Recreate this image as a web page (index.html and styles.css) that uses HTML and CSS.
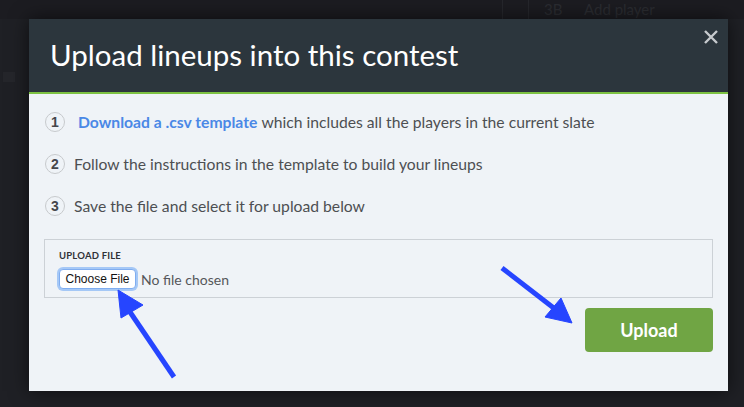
FILE: index.html
```html
<!doctype html>
<html lang="en">
  <head>
    <meta charset="UTF-8" />
    <meta name="viewport" content="width=device-width, initial-scale=1.0" />
    <title>Upload lineups</title>
    <link rel="stylesheet" href="styles.css">
  </head>
  <body>
    <div class="backdrop">
      <span class="col-line"></span>
      <span class="col-line"></span>
      <span class="pos">3B</span>
      <span class="add">Add player</span>
    </div>
    <div class="side-mark"></div>

    <div class="modal">
      <div class="modal-header">
        <h1>Upload lineups into this contest</h1>
        <button class="close" aria-label="Close">
          <svg width="16" height="16" viewBox="0 0 16 16">
            <path d="M2 2 L14 14 M14 2 L2 14" stroke="#c6cacd" stroke-width="2.4" fill="none" />
          </svg>
        </button>
      </div>
      <div class="modal-body">
        <ol class="steps">
          <li><span class="num">1</span> <a href="#" class="link">Download a .csv template</a> which includes all the players in the current slate</li>
          <li><span class="num">2</span>Follow the instructions in the template to build your lineups</li>
          <li><span class="num">3</span>Save the file and select it for upload below</li>
        </ol>
        <div class="upload-box">
          <div class="upload-label">UPLOAD FILE</div>
          <div class="file-row">
            <button class="choose">Choose File</button>
            <span class="no-file">No file chosen</span>
          </div>
        </div>
        <div class="actions">
          <button class="upload">Upload</button>
        </div>
      </div>
    </div>

    <svg class="arrows" width="744" height="407" viewBox="0 0 744 407">
      <g fill="#2645ff" stroke="#2645ff">
        <line x1="174" y1="377" x2="130" y2="312" stroke-width="5" />
        <polygon points="118,290 121,318 143,305" stroke-width="1" />
        <line x1="502" y1="268" x2="555" y2="309" stroke-width="5" />
        <polygon points="572,323 545,317 561,298" stroke-width="1" />
      </g>
    </svg>
  </body>
</html>
```

FILE: styles.css
```css
body {
  margin: 0;
  height: 407px;
  overflow: hidden;
  background-color: #1f2025;
  font-family: Lato, "Liberation Sans", sans-serif;
  position: relative;
}
.backdrop {
  height: 19px;
  display: flex;
  align-items: flex-end;
  padding-left: 502px;
  color: #2b2c31;
  font-size: 15px;
  line-height: 19px;
  background-color: #1c1c21;
}
.col-line {
  width: 1px;
  height: 19px;
  background-color: #26272c;
  margin-right: 25px;
}
.pos {
  margin-left: -10px;
  width: 40px;
}
.side-mark {
  position: absolute;
  left: 3px;
  top: 72px;
  width: 12px;
  height: 10px;
  background-color: #25262b;
}
.modal {
  margin-left: 29px;
  width: 699px;
  box-shadow: 0 0 18px rgba(0, 0, 0, 0.6);
  position: relative;
}
.modal-header {
  height: 73px;
  background-color: #2c363d;
  border-bottom: 2px solid #7dc242;
  display: flex;
  align-items: center;
  justify-content: space-between;
  padding-left: 21px;
  padding-right: 9px;
}
.modal-header h1 {
  margin: 0 0 3px 0;
  font-weight: 400;
  font-size: 29.5px;
  color: #ffffff;
  letter-spacing: 0;
}
.close {
  background: none;
  border: none;
  padding: 0;
  align-self: flex-start;
  margin-top: 10px;
  width: 16px;
  height: 16px;
}
.modal-body {
  background-color: #eff3f7;
  padding: 18px 15px 39px 16px;
}
.steps {
  list-style: none;
  margin: 0;
  padding: 0;
  display: flex;
  flex-direction: column;
  gap: 22px;
}
.steps li {
  display: flex;
  align-items: center;
  height: 20px;
  font-size: 15.7px;
  color: #4d4f52;
}
.num {
  width: 18px;
  height: 18px;
  border: 1px solid #c7cacd;
  border-radius: 50%;
  display: flex;
  align-items: center;
  justify-content: center;
  font-family: "Liberation Sans", sans-serif;
  font-size: 14px;
  font-weight: 700;
  color: #45474b;
  margin-right: 9px;
}
.link {
  color: #4a88e6;
  font-weight: 700;
  text-decoration: none;
  margin-left: 4px;
  margin-right: 4px;
}
.upload-box {
  margin-top: 23px;
  margin-left: -1px;
  height: 57px;
  border: 1px solid #ccd1d6;
  padding-left: 14px;
}
.upload-label {
  margin-top: 10px;
  font-size: 9.5px;
  font-weight: 700;
  color: #2f3236;
  letter-spacing: 0.2px;
}
.file-row {
  display: flex;
  align-items: center;
  margin-top: 8px;
}
.choose {
  width: 77px;
  height: 20px;
  padding: 0;
  background-color: #ffffff;
  border: 1px solid #7fadf0;
  border-radius: 4px;
  box-shadow: 0 0 0 2px #a5c8f6;
  font-family: "Liberation Sans", sans-serif;
  font-size: 12px;
  color: #111111;
}
.no-file {
  margin-left: 5px;
  font-size: 14px;
  color: #55575a;
}
.actions {
  display: flex;
  justify-content: flex-end;
  margin-top: 10px;
}
.upload {
  width: 128px;
  height: 44px;
  background-color: #70a544;
  border: none;
  border-radius: 4px;
  color: #ffffff;
  font-family: Lato, "Liberation Sans", sans-serif;
  font-size: 18px;
  font-weight: 700;
}
.arrows {
  position: absolute;
  left: 0;
  top: 0;
}
```
